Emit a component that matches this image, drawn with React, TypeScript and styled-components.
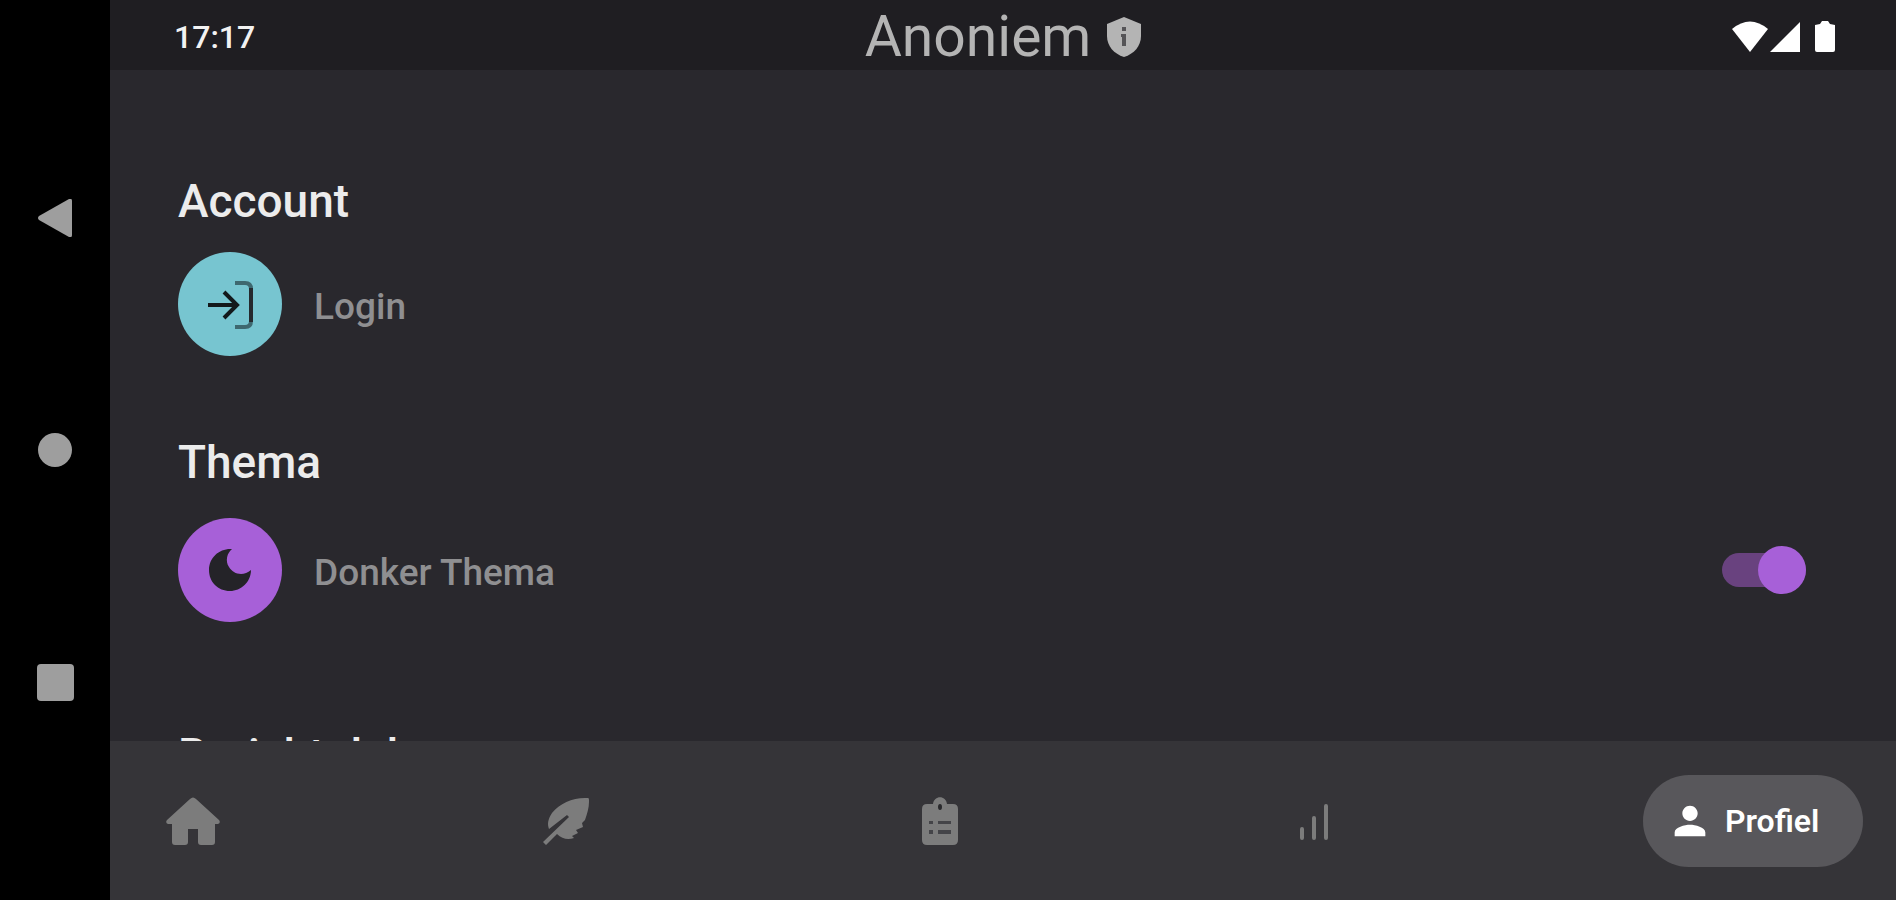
import { useState } from "react";
import styled, { createGlobalStyle } from "styled-components";
import { MdPerson } from "react-icons/md";

const GlobalStyle = createGlobalStyle`
  *, *::before, *::after { box-sizing: border-box; }
  body { margin: 0; background: #000; font-family: Roboto, "Liberation Sans", sans-serif; }
  button { border: 0; padding: 0; background: none; font: inherit; color: inherit; cursor: pointer; }
  svg { display: block; }
`;

const Device = styled.div`
  display: flex;
  height: 100vh;
  overflow: hidden;
`;

const SystemNav = styled.nav`
  flex: 0 0 110px;
  display: flex;
  flex-direction: column;
  align-items: center;
  justify-content: center;
  gap: 184px;
  background: #000;
  color: #9e9e9e;
`;

const SystemButton = styled.button`
  width: 48px;
  height: 48px;
  display: grid;
  place-items: center;
`;

const Screen = styled.div`
  flex: 1;
  min-width: 0;
  display: flex;
  flex-direction: column;
  background: #29282d;
`;

const StatusBar = styled.header`
  flex: 0 0 70px;
  display: grid;
  grid-template-columns: 1fr auto 1fr;
  align-items: center;
  padding: 0 60px 0 64px;
  background: #1f1e22;
`;

const Clock = styled.time`
  padding-top: 4px;
  font-size: 32px;
  line-height: 40px;
  font-weight: 500;
  color: #f2f2f2;
`;

const UserTitle = styled.h1`
  display: flex;
  align-items: center;
  gap: 16px;
  margin: 0;
  padding: 4px 4px 0 0;
  font-size: 57px;
  line-height: 64px;
  font-weight: 400;
  color: #b4b4b4;
`;

const StatusIcons = styled.div`
  justify-self: end;
  display: flex;
  padding-top: 4px;
  color: #fff;
`;

const Content = styled.main`
  flex: 1;
  min-height: 0;
  overflow: hidden;
  padding: 101px 90px 0 68px;
`;

const Section = styled.section<{ $gap: number }>`
  margin-bottom: ${(p) => p.$gap}px;
`;

const SectionTitle = styled.h2`
  margin: 0 0 21px;
  font-size: 46px;
  line-height: 60px;
  font-weight: 500;
  color: #ececec;
`;

const Row = styled.div<{ $height: number }>`
  display: flex;
  align-items: center;
  justify-content: space-between;
  height: ${(p) => p.$height}px;
`;

const Entry = styled.div`
  display: flex;
  align-items: center;
  gap: 32px;
  font-size: 37px;
  line-height: 44px;
  font-weight: 500;
  color: #8f8f91;
`;

const Badge = styled.span<{ $color: string }>`
  width: 104px;
  height: 104px;
  display: grid;
  place-items: center;
  border-radius: 50%;
  background: ${(p) => p.$color};
  color: #242328;
`;

const Label = styled.span`
  padding-top: 6px;
`;

const Toggle = styled.input`
  appearance: none;
  display: flex;
  align-items: center;
  width: 84px;
  height: 34px;
  margin: 0;
  border-radius: 17px;
  background: #69427f;
  cursor: pointer;

  &::before {
    content: "";
    flex: 0 0 48px;
    height: 48px;
    border-radius: 50%;
    background: #a760d8;
  }
  &:checked::before { margin-left: auto; }
`;

const TabBar = styled.nav`
  flex: 0 0 159px;
  display: flex;
  align-items: center;
  justify-content: space-between;
  padding: 0 33px 0 39px;
  background: #353438;
  color: #7c7c7c;
`;

const Tab = styled.button`
  width: 88px;
  height: 60px;
  display: grid;
  place-items: center;
`;

const ActiveTab = styled.button`
  display: flex;
  align-items: center;
  gap: 12px;
  width: 220px;
  height: 92px;
  padding: 0 24px;
  border-radius: 46px;
  background: #58575b;
  color: #fff;
  font-size: 32px;
  line-height: 40px;
  font-weight: 600;
`;

const ShieldIcon = () => (
  <svg width="34" height="40" viewBox="0 0 34 40" fill="currentColor" aria-hidden="true">
    <path d="M17 0 34 7v12c0 10-7 18-17 21C7 37 0 29 0 19V7Z" />
    <path d="M15 10h4v4h-4zM14 17h5v12h-4v-9h-1z" fill="#555457" />
  </svg>
);

const LoginIcon = () => (
  <svg width="50" height="50" viewBox="0 0 50 50" fill="none" stroke="currentColor" strokeWidth="4" aria-hidden="true">
    <path d="M3 26h29M19 13l13 13-13 13" stroke="#13191b" />
    <path d="M30 4h10q6 0 6 6v32q0 6-6 6H30" stroke="#3e686f" />
    <path d="M46 9v34" stroke="#252a2e" />
  </svg>
);

const MoonIcon = () => (
  <svg width="44" height="44" viewBox="0 0 44 44" fill="currentColor" aria-hidden="true">
    <path d="M24 1C12 0 1 9 1 22c0 12 9 21 21 21 11 0 21-9 21-21-8 7-18 4-22-3-4-6-2-14 3-18Z" />
  </svg>
);

const HomeIcon = () => (
  <svg width="54" height="48" viewBox="0 0 54 48" fill="currentColor" aria-hidden="true">
    <path d="M24 2q3-3 6 0l23 21q2 3-1 4h-3v18q0 3-3 3H35q-3 0-3-3V32H22v13q0 3-3 3H9q-3 0-3-3V27H2q-3-1-1-4Z" />
  </svg>
);

const FeatherIcon = () => (
  <svg width="48" height="48" viewBox="0 0 48 48" fill="currentColor" aria-hidden="true">
    <path d="M45 1C31 0 17 6 9 16c-4 6-5 11-3 16l18-14 2 2L0 45l3 3 11-11c5 5 11 6 17 4l-2-2 6-3-2-3 7-3-1-4 3-3c2-6 4-12 4-18 0-3 0-4-1-4Z" />
  </svg>
);

const ClipboardIcon = () => (
  <svg width="36" height="48" viewBox="0 0 36 48" fill="currentColor" aria-hidden="true">
    <path d="M5 7h6c1-9 13-9 14 0h6q5 0 5 5v31q0 5-5 5H5q-5 0-5-5V12q0-5 5-5Z" />
    <ellipse cx="18" cy="10" rx="2" ry="3" fill="#29292c" />
    <path d="M7 24h4v3H7zm9 0h13v3H16zM7 33h4v4H7zm9 0h13v4H16z" fill="#444448" />
  </svg>
);

const BarsIcon = () => (
  <svg width="30" height="40" viewBox="0 0 30 40" fill="none" stroke="currentColor" strokeWidth="4" strokeLinecap="round" aria-hidden="true">
    <path d="M3 28v9M15 17v20M27 5v32" />
  </svg>
);

export default function App() {
  const [dark, setDark] = useState(true);

  return (
    <Device>
      <GlobalStyle />
      <SystemNav aria-label="Systeem">
        <SystemButton aria-label="Terug">
          <svg width="34" height="38" viewBox="0 0 34 38" fill="currentColor">
            <path d="M31 0q3-1 3 2v34q0 3-3 2L1 21q-2-2 0-4Z" />
          </svg>
        </SystemButton>
        <SystemButton aria-label="Start">
          <svg width="34" height="34" viewBox="0 0 34 34" fill="currentColor">
            <circle cx="17" cy="17" r="17" />
          </svg>
        </SystemButton>
        <SystemButton aria-label="Recent">
          <svg width="37" height="37" viewBox="0 0 37 37" fill="currentColor">
            <rect width="37" height="37" rx="4" />
          </svg>
        </SystemButton>
      </SystemNav>

      <Screen>
        <StatusBar>
          <Clock>17:17</Clock>
          <UserTitle>
            Anoniem
            <ShieldIcon />
          </UserTitle>
          <StatusIcons>
            <svg width="104" height="34" viewBox="0 0 104 34" fill="currentColor" aria-hidden="true">
              <path d="M0 9Q18-6 36 9L18 32Z" />
              <path d="M38 32 68 2v30Z" />
              <path d="M83 5 88 4l2-3h6l2 3 5 1v25q0 2-2 2H85q-2 0-2-2Z" />
            </svg>
          </StatusIcons>
        </StatusBar>

        <Content>
          <Section $gap={76}>
            <SectionTitle>Account</SectionTitle>
            <Row $height={104}>
              <Entry as="button">
                <Badge $color="#77c5d0"><LoginIcon /></Badge>
                <Label>Login</Label>
              </Entry>
            </Row>
          </Section>
          <Section $gap={98}>
            <SectionTitle>Thema</SectionTitle>
            <Row $height={114}>
              <Entry>
                <Badge $color="#a760d8"><MoonIcon /></Badge>
                <Label as="label" htmlFor="dark-theme">Donker Thema</Label>
              </Entry>
              <Toggle
                id="dark-theme"
                type="checkbox"
                checked={dark}
                onChange={(e) => setDark(e.target.checked)}
              />
            </Row>
          </Section>
          <Section $gap={0}>
            <SectionTitle>Bericht delen</SectionTitle>
          </Section>
        </Content>

        <TabBar aria-label="Hoofdmenu">
          <Tab aria-label="Home"><HomeIcon /></Tab>
          <Tab aria-label="Dagboek"><FeatherIcon /></Tab>
          <Tab aria-label="Vragenlijsten"><ClipboardIcon /></Tab>
          <Tab aria-label="Statistieken"><BarsIcon /></Tab>
          <ActiveTab aria-current="page">
            <MdPerson size={46} />
            Profiel
          </ActiveTab>
        </TabBar>
      </Screen>
    </Device>
  );
}
